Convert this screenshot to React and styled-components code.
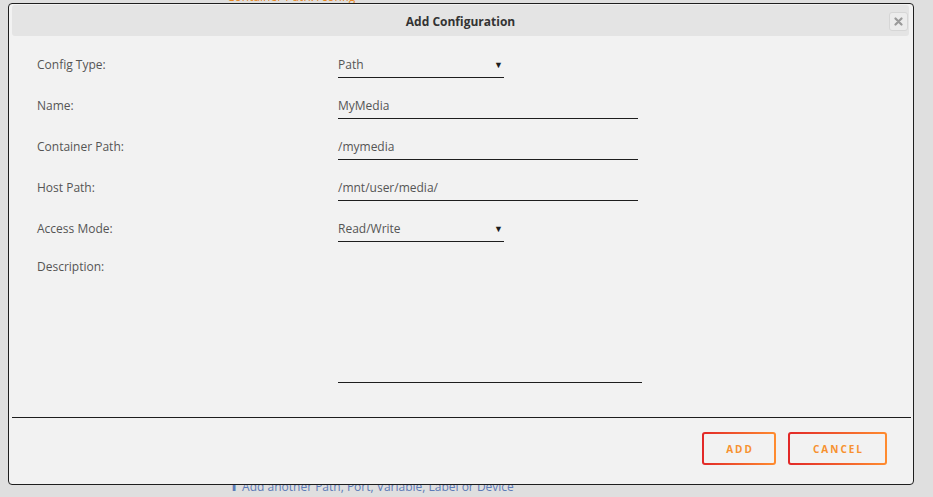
import React from "react";
import styled, { createGlobalStyle } from "styled-components";

const Global = createGlobalStyle`
  html, body { margin: 0; padding: 0; }
  body {
    background: #dfdfdf;
    font-family: "Open Sans", "Noto Sans", sans-serif;
    width: 933px;
    height: 497px;
    overflow: hidden;
  }
`;

const Page = styled.div`
  position: relative;
  width: 933px;
  height: 497px;
  overflow: hidden;
`;

const BackTop = styled.div`
  padding: 0 0 0 227px;
  margin-top: -9px;
  color: #e8891f;
  font-size: 12px;
  line-height: 12px;
`;

const BackLink = styled.div`
  position: absolute;
  left: 229px;
  top: 480px;
  color: #5d7bb8;
  font-size: 12px;
  line-height: 14px;
`;

const Dialog = styled.div`
  position: absolute;
  left: 8px;
  top: 3px;
  width: 906px;
  height: 482px;
  box-sizing: border-box;
  background: #f2f2f2;
  border: 1px solid #1e1e1e;
  border-radius: 4px;
  display: flex;
  flex-direction: column;
`;

const TitleBar = styled.div`
  margin: 1px 4px 0 3px;
  height: 31px;
  background: #e4e4e4;
  border-radius: 3px;
  display: flex;
  align-items: center;
  justify-content: center;
  position: relative;
`;

const Title = styled.span`
  font-size: 12px;
  font-weight: 700;
  color: #333;
  padding-top: 2px;
`;

const Close = styled.button`
  position: absolute;
  right: 1px;
  top: 7px;
  width: 19px;
  height: 19px;
  box-sizing: border-box;
  padding: 0;
  border: 1px solid #d6d6d6;
  border-radius: 3px;
  background: #ececec;
  display: flex;
  align-items: center;
  justify-content: center;
`;

const Body = styled.div`
  flex: 1;
  padding: 14px 0 0 28px;
  display: flex;
  flex-direction: column;
  gap: 13px;
`;

const Row = styled.div`
  display: grid;
  grid-template-columns: 301px 1fr;
  align-items: start;
`;

const Label = styled.div`
  font-size: 12px;
  color: #555;
  height: ${(p) => (p.$tall ? "24px" : "28px")};
  line-height: ${(p) => (p.$tall ? "24px" : "30px")};
`;

const Field = styled.div`
  width: ${(p) => p.$w}px;
  height: ${(p) => p.$h || 28}px;
  box-sizing: border-box;
  border-bottom: 1px solid #1e1e1e;
  font-size: 12px;
  color: #555;
  line-height: 27px;
  padding-top: ${(p) => (p.$h ? 0 : 1)}px;
  display: flex;
  justify-content: space-between;
  align-items: ${(p) => (p.$h ? "flex-start" : "center")};
`;

const Arrow = styled.span`
  font-size: 9px;
  color: #1e1e1e;
  margin-right: 1px;
`;

const Divider = styled.div`
  margin: 0 2px 0 3px;
  height: 1px;
  background: #1e1e1e;
`;

const Footer = styled.div`
  display: flex;
  justify-content: flex-end;
  gap: 12px;
  padding: 14px 26px 19px 0;
`;

const Btn = styled.button`
  width: ${(p) => p.$w}px;
  height: 33px;
  box-sizing: border-box;
  border: 2px solid transparent;
  border-radius: 3px;
  background: linear-gradient(#f2f2f2, #f2f2f2) padding-box,
    linear-gradient(90deg, #e22828, #ff8c2f) border-box;
  color: #f7912f;
  font-family: "Open Sans", sans-serif;
  font-size: 10px;
  font-weight: 700;
  letter-spacing: 2px;
  padding: 0 0 0 2px;
`;

const rows = [
  { label: "Config Type:", value: "Path", select: true },
  { label: "Name:", value: "MyMedia" },
  { label: "Container Path:", value: "/mymedia" },
  { label: "Host Path:", value: "/mnt/user/media/" },
  { label: "Access Mode:", value: "Read/Write", select: true },
];

export default function App() {
  return (
    <Page>
      <Global />
      <BackTop>Container Path: /config</BackTop>
      <BackLink>⬆ Add another Path, Port, Variable, Label or Device</BackLink>
      <Dialog>
        <TitleBar>
          <Title>Add Configuration</Title>
          <Close aria-label="close">
            <svg width="9" height="9" viewBox="0 0 9 9">
              <path d="M1.5 1.5L7.5 7.5M7.5 1.5L1.5 7.5" stroke="#9a9a9a" strokeWidth="2.2" strokeLinecap="round" />
            </svg>
          </Close>
        </TitleBar>
        <Body>
          {rows.map((r) => (
            <Row key={r.label}>
              <Label>{r.label}</Label>
              <Field $w={r.select ? 166 : 300}>
                <span>{r.value}</span>
                {r.select && <Arrow>▼</Arrow>}
              </Field>
            </Row>
          ))}
          <Row>
            <Label $tall>Description:</Label>
            <Field $w={304} $h={128} />
          </Row>
        </Body>
        <Divider />
        <Footer>
          <Btn $w={74}>ADD</Btn>
          <Btn $w={99}>CANCEL</Btn>
        </Footer>
      </Dialog>
    </Page>
  );
}
